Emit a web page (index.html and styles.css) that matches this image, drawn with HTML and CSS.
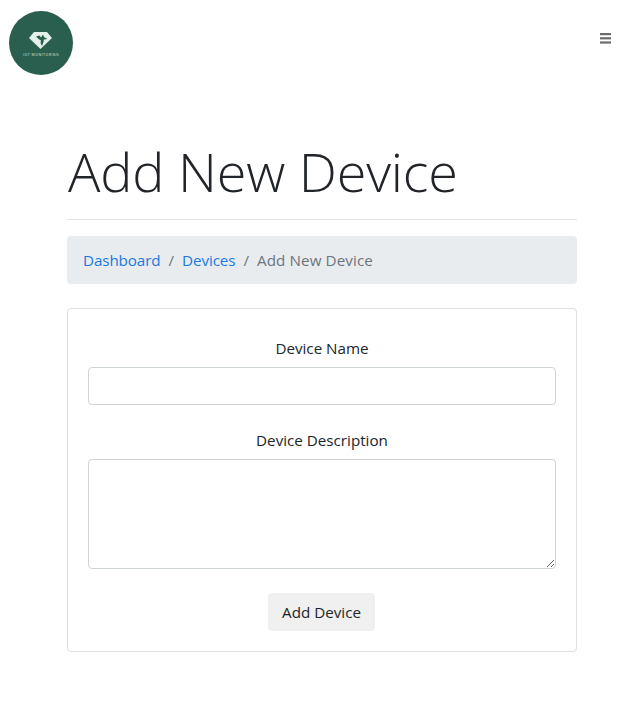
FILE: index.html
```html
<!DOCTYPE html>
<html lang="en">
<head>
<meta charset="utf-8">
<title>Add New Device</title>
<link rel="stylesheet" href="styles.css">
</head>
<body>
<header class="topbar">
  <div class="logo">
    <svg class="logo-mark" viewBox="0 0 23 17" width="23" height="17" aria-hidden="true">
      <path d="M5 0H18L23 6L11.5 17L0 6Z" fill="#e4f0ea"/>
      <path d="M7 4.5L10.5 3.5L12 5.5L14 2.5L15 5L18.5 7L15 7.5L14.5 10L13 14L11.5 11L12 8.5L9.5 7Z" fill="#2a5f4f"/>
    </svg>
    <span class="logo-text">IOT MONITORING</span>
  </div>
  <svg class="menu" viewBox="0 0 11 11" width="11" height="11" aria-hidden="true">
    <rect x="0" y="0" width="11" height="2.2" fill="#6b6b6b"/>
    <rect x="0" y="4.2" width="11" height="2.2" fill="#6b6b6b"/>
    <rect x="0" y="8.4" width="11" height="2.2" fill="#6b6b6b"/>
  </svg>
</header>
<main class="container">
  <h1 class="title">Add New Device</h1>
  <hr class="rule">
  <nav class="crumbs">
    <a href="#">Dashboard</a><span class="sep">/</span><a href="#">Devices</a><span class="sep">/</span><span class="current">Add New Device</span>
  </nav>
  <form class="card">
    <div class="field">
      <label for="name">Device Name</label>
      <input id="name" type="text">
    </div>
    <div class="field">
      <label for="desc">Device Description</label>
      <textarea id="desc"></textarea>
    </div>
    <button type="button" class="btn">Add Device</button>
  </form>
</main>
</body>
</html>
```
FILE: styles.css
```css
* { box-sizing: border-box; }
html, body { margin: 0; padding: 0; }
body {
  background: #fff;
  color: #212529;
  font-family: "Open Sans", "Noto Sans", sans-serif;
  font-size: 15.2px;
  line-height: 24px;
}
.topbar {
  display: flex;
  justify-content: space-between;
  align-items: flex-start;
  padding: 11px 25px 0 9px;
  height: 135px;
}
.logo {
  width: 64px;
  height: 64px;
  border-radius: 50%;
  background: #2a5f4f;
  display: flex;
  flex-direction: column;
  align-items: center;
  padding-top: 21px;
}
.logo-mark { display: block; margin-left: -1px; }
.logo-text {
  font-size: 3.5px;
  line-height: 5px;
  margin-top: 3px;
  letter-spacing: .5px;
  color: #d5e5de;
  white-space: nowrap;
}
.menu { margin-top: 22px; }
.container {
  width: 510px;
  margin-left: 67px;
}
.title {
  margin: 0;
  padding-left: 1px;
  font-size: 54px;
  font-weight: 300;
  line-height: 72px;
  height: 84px;
  letter-spacing: -.2px;
  color: #212529;
}
.rule {
  margin: 0 0 16px;
  border: 0;
  border-top: 1px solid #e3e3e3;
}
.crumbs {
  height: 48px;
  background: #e9ecef;
  border-radius: 4px;
  padding: 12px 16px;
  margin-bottom: 24px;
  display: flex;
  white-space: nowrap;
}
.crumbs a { color: #1a7ae0; text-decoration: none; letter-spacing: -.1px; }
.sep { color: #6c757d; padding: 0 8px; }
.current { color: #6c757d; letter-spacing: .1px; }
.card {
  height: 344px;
  border: 1px solid #dfdfdf;
  border-radius: 4px;
  padding: 27px 20px 20px;
  display: flex;
  flex-direction: column;
  align-items: center;
}
.field {
  width: 100%;
  display: flex;
  flex-direction: column;
  align-items: center;
}
.field label { margin-bottom: 7px; }
.field + .field { margin-top: 23px; }
.field input, .field textarea {
  display: block;
  width: 100%;
  border: 1px solid #ced4da;
  border-radius: 4px;
  background: #fff;
  outline: 0;
  font: inherit;
}
.field input { height: 38px; }
.field textarea { height: 110px; }
.btn {
  margin-top: 24px;
  margin-right: 1px;
  width: 107px;
  height: 38px;
  border: 0;
  border-radius: 4px;
  background: #f0f0f0;
  color: #212529;
  font: inherit;
  padding: 0;
}
```
